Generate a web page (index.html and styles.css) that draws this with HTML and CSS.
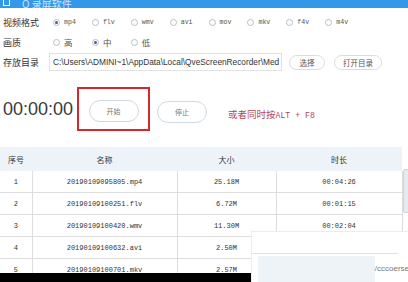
FILE: index.html
```html
<!DOCTYPE html>
<html lang="zh-CN">
<head>
    <meta charset="UTF-8">
    <title>QveScreenRecorder</title>
    <link rel="stylesheet" href="styles.css">
</head>
<body>
    <div class="titlebar">
        <span class="app-icon"></span>
        <span class="app-title">Q 录屏软件</span>
    </div>

    <div class="settings">
        <div class="setting-row">
            <span class="setting-label">视频格式</span>
            <div class="radio-group">
                <label class="radio"><span class="dot checked"></span><span class="mono">mp4</span></label>
                <label class="radio"><span class="dot"></span><span class="mono">flv</span></label>
                <label class="radio"><span class="dot"></span><span class="mono">wmv</span></label>
                <label class="radio"><span class="dot"></span><span class="mono">avi</span></label>
                <label class="radio"><span class="dot"></span><span class="mono">mov</span></label>
                <label class="radio"><span class="dot"></span><span class="mono">mkv</span></label>
                <label class="radio"><span class="dot"></span><span class="mono">f4v</span></label>
                <label class="radio"><span class="dot"></span><span class="mono">m4v</span></label>
            </div>
        </div>
        <div class="setting-row">
            <span class="setting-label">画质</span>
            <div class="radio-group">
                <label class="radio"><span class="dot"></span><span>高</span></label>
                <label class="radio"><span class="dot checked"></span><span>中</span></label>
                <label class="radio"><span class="dot"></span><span>低</span></label>
            </div>
        </div>
        <div class="setting-row">
            <span class="setting-label short">存放目录</span>
            <div class="path-input">C:\Users\ADMINI~1\AppData\Local\QveScreenRecorder\Med</div>
            <button class="pill-btn choose">选择</button>
            <button class="pill-btn open">打开目录</button>
        </div>
    </div>

    <div class="controls">
        <div class="timer">00:00:00</div>
        <div class="highlight">
            <button class="round-btn">开始</button>
        </div>
        <button class="round-btn stop">停止</button>
        <div class="hotkey">或者同时按<span class="mono">ALT + F8</span></div>
    </div>

    <div class="list-area">
        <table class="file-table">
            <thead>
                <tr>
                    <th class="col-no">序号</th>
                    <th class="col-name">名称</th>
                    <th class="col-size">大小</th>
                    <th class="col-time">时长</th>
                </tr>
            </thead>
            <tbody>
                <tr><td>1</td><td>20190109095805.mp4</td><td>25.18M</td><td>00:04:26</td></tr>
                <tr><td>2</td><td>20190109100251.flv</td><td>6.72M</td><td>00:01:15</td></tr>
                <tr><td>3</td><td>20190109100420.wmv</td><td>11.30M</td><td>00:02:04</td></tr>
                <tr><td>4</td><td>20190109100632.avi</td><td>2.50M</td><td></td></tr>
                <tr><td>5</td><td>20190109100701.mkv</td><td>2.57M</td><td></td></tr>
            </tbody>
        </table>
        <div class="scroll-track">
            <div class="scroll-thumb"></div>
        </div>
    </div>

    <div class="popup">
        <div class="popup-line"></div>
        <div class="popup-body">
            <div class="popup-box"></div>
            <span class="popup-text">/cccoerse</span>
        </div>
    </div>
    <div class="taskbar"></div>
</body>
</html>
```

FILE: styles.css
```css
body {
    margin: 0;
    width: 408px;
    height: 282px;
    overflow: hidden;
    position: relative;
    background-color: #fff;
    color: #333;
    font-family: "Noto Sans CJK SC", "Liberation Sans", sans-serif;
}

.mono {
    font-family: "Liberation Mono", "Noto Sans CJK SC", monospace;
}

.titlebar {
    height: 8px;
    overflow: hidden;
    background-color: #3398ea;
    display: flex;
    align-items: flex-end;
    gap: 12px;
    padding-left: 3px;
}

.app-icon {
    width: 5px;
    height: 10px;
    border: 1px solid #fff;
    flex-shrink: 0;
    margin-bottom: 2px;
}

.app-title {
    color: #cfe5fa;
    font-size: 10px;
    line-height: 12px;
    flex-shrink: 0;
    margin-bottom: -2px;
}

.settings {
    padding: 4px 0 0 3px;
}

.setting-row {
    display: flex;
    align-items: center;
    height: 20px;
}

.setting-label {
    width: 50px;
    flex-shrink: 0;
    font-size: 9px;
    color: #333;
}

.setting-label.short {
    width: 46px;
}

.radio-group {
    display: flex;
}

.radio {
    width: 38.9px;
    display: flex;
    align-items: center;
    gap: 4px;
    font-size: 8.5px;
    color: #555;
}

.radio .mono {
    font-size: 6.6px;
}

.dot {
    width: 5px;
    height: 5px;
    border: 1px solid #b8bec6;
    border-radius: 50%;
    display: flex;
    align-items: center;
    justify-content: center;
    flex-shrink: 0;
}

.dot.checked::after {
    content: "";
    width: 3px;
    height: 3px;
    border-radius: 50%;
    background-color: #3f5f8f;
}

.path-input {
    width: 228px;
    height: 16px;
    border: 1px solid #e2e2e2;
    padding-left: 3px;
    font-family: "Liberation Sans", sans-serif;
    font-size: 8.3px;
    line-height: 16px;
    color: #333;
    white-space: nowrap;
    overflow: hidden;
}

.pill-btn {
    height: 15px;
    padding: 0;
    background-color: #fff;
    border: 1px solid #dcdcdc;
    border-radius: 8px;
    font-family: "Noto Sans CJK SC", sans-serif;
    font-size: 7.5px;
    color: #555;
    cursor: pointer;
}

.pill-btn.choose {
    width: 36px;
    margin-left: 7px;
}

.pill-btn.open {
    width: 48px;
    margin-left: 9px;
}

.controls {
    display: flex;
    align-items: center;
    height: 44px;
    margin-top: 15px;
    padding-left: 3px;
}

.timer {
    width: 68px;
    font-family: "Liberation Sans", sans-serif;
    font-size: 18px;
    color: #3a3a3a;
}

.highlight {
    width: 69px;
    height: 36px;
    margin-left: 6px;
    border: 2px solid #d6272f;
    display: flex;
    align-items: center;
    justify-content: center;
    padding-top: 4px;
}

.round-btn {
    width: 50px;
    height: 22px;
    padding: 0;
    background-color: #fff;
    border: 1px solid #cfd9e2;
    border-radius: 11px;
    font-family: "Noto Sans CJK SC", sans-serif;
    font-size: 7px;
    color: #777;
    cursor: pointer;
}

.round-btn.stop {
    margin-left: 7px;
    margin-top: 6px;
}

.hotkey {
    margin-left: 21px;
    margin-top: 10px;
    font-size: 9.5px;
    color: #b44656;
}

.hotkey .mono {
    font-size: 8.2px;
}

.list-area {
    display: flex;
    margin-top: 16px;
}

.file-table {
    width: 402px;
    border-collapse: collapse;
    table-layout: fixed;
}

.file-table th {
    height: 24px;
    padding: 0;
    background-color: #edf3f8;
    font-weight: normal;
    font-size: 8px;
    color: #333;
}

.col-no { width: 32px; }
.col-name { width: 145px; }
.col-size { width: 99px; }
.col-time { width: 126px; }

.file-table td {
    height: 21px;
    padding: 0;
    border: 1px solid #dedede;
    border-top: none;
    text-align: center;
    font-family: "Liberation Mono", monospace;
    font-size: 7px;
    color: #333;
}

.file-table td:first-child {
    border-left: none;
}

.scroll-track {
    width: 6px;
}

.scroll-thumb {
    margin-top: 22px;
    width: 4px;
    height: 42px;
    background-color: #e6ebf0;
    border: 1px solid #ccd4dc;
    border-radius: 2px;
}

.popup {
    position: absolute;
    left: 251px;
    top: 231px;
    width: 157px;
    height: 51px;
    background-color: #fff;
    border-top: 1px solid #ececec;
    border-left: 1px solid #ececec;
}

.popup-line {
    height: 21px;
    width: 146px;
    border-bottom: 1px solid #e2e2e2;
}

.popup-body {
    display: flex;
    align-items: center;
    height: 28px;
    padding-left: 6px;
}

.popup-box {
    width: 119px;
    height: 26px;
    align-self: flex-end;
    background-color: #edf3f6;
}

.popup-text {
    font-family: "Liberation Sans", sans-serif;
    font-size: 8px;
    color: #777;
    white-space: nowrap;
}

.taskbar {
    position: absolute;
    left: 0;
    bottom: 0;
    width: 251px;
    height: 9px;
    background-color: #000;
}
```
